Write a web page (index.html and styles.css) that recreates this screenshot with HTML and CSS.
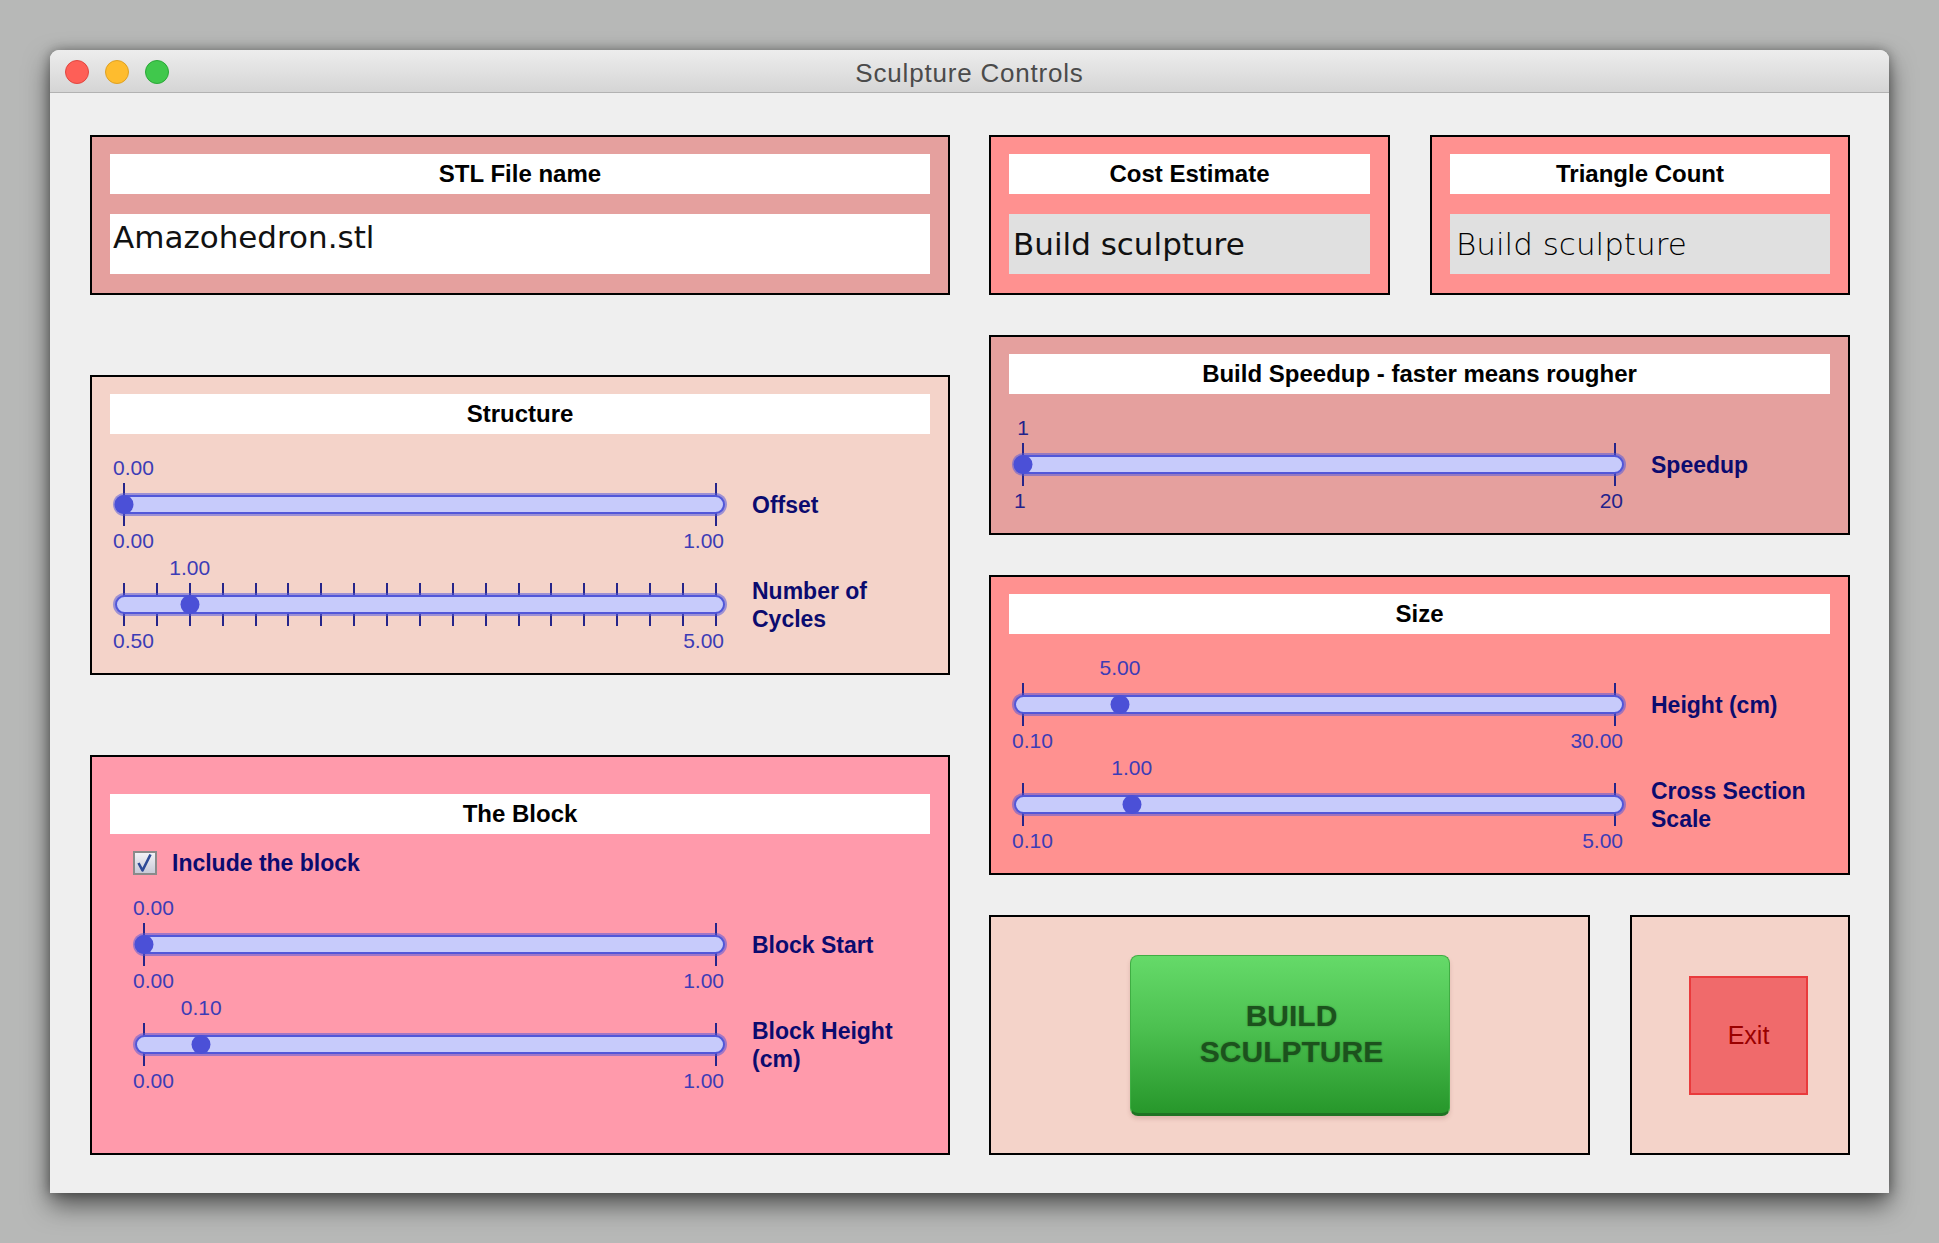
FILE: index.html
```html
<!DOCTYPE html>
<html>
<head>
<meta charset="utf-8">
<title>Sculpture Controls</title>
<link rel="stylesheet" href="styles.css">
</head>
<body>
<div class="window">
  <div class="titlebar">
    <div class="lights"><span class="light red"></span><span class="light yellow"></span><span class="light green"></span></div>
    <div class="title">Sculpture Controls</div>
    <div></div>
  </div>
  <div class="content">
    <div class="col left">
      <section class="panel p-stl h160">
        <div class="hdr">STL File name</div>
        <div class="field white">Amazohedron.stl</div>
      </section>

      <section class="panel p-soft h300">
        <div class="hdr">Structure</div>
        <div class="sliders">
          <div class="srow">
            <div class="slider">
              <div class="sv-top"><span class="val start">0.00</span></div>
              <div class="trackwrap">
                <div class="ticks"><i></i><i></i></div>
                <div class="track"></div>
                <div class="rail"><span class="thumb" style="left:0%"></span></div>
              </div>
              <div class="sv-bot"><span>0.00</span><span>1.00</span></div>
            </div>
            <div class="slabel">Offset</div>
          </div>
          <div class="srow">
            <div class="slider">
              <div class="sv-top"><div class="vrail"><span class="val" style="left:11.11%">1.00</span></div></div>
              <div class="trackwrap">
                <div class="ticks"><i></i><i></i><i></i><i></i><i></i><i></i><i></i><i></i><i></i><i></i><i></i><i></i><i></i><i></i><i></i><i></i><i></i><i></i><i></i></div>
                <div class="track"></div>
                <div class="rail"><span class="thumb" style="left:11.11%"></span></div>
              </div>
              <div class="sv-bot"><span>0.50</span><span>5.00</span></div>
            </div>
            <div class="slabel">Number of Cycles</div>
          </div>
        </div>
      </section>

      <section class="panel p-block h400">
        <div class="hdr">The Block</div>
        <div class="check">
          <svg class="cb" width="24" height="24" viewBox="0 0 24 24">
            <defs><linearGradient id="cbg" x1="0" y1="0" x2="0" y2="1"><stop offset="0" stop-color="#f4f4f8"/><stop offset="1" stop-color="#c6c8d6"/></linearGradient></defs>
            <rect x="1" y="1" width="22" height="22" fill="url(#cbg)" stroke="#8a8a8a" stroke-width="2"/>
            <path d="M5.5 12 L9.5 19.5 L17.5 3.5" fill="none" stroke="#2d4a96" stroke-width="2.6" stroke-linejoin="round"/>
          </svg>
          <span class="cblabel">Include the block</span>
        </div>
        <div class="sliders inset">
          <div class="srow">
            <div class="slider narrow">
              <div class="sv-top"><span class="val start">0.00</span></div>
              <div class="trackwrap">
                <div class="ticks"><i></i><i></i></div>
                <div class="track"></div>
                <div class="rail"><span class="thumb" style="left:0%"></span></div>
              </div>
              <div class="sv-bot"><span>0.00</span><span>1.00</span></div>
            </div>
            <div class="slabel">Block Start</div>
          </div>
          <div class="srow">
            <div class="slider narrow">
              <div class="sv-top"><div class="vrail"><span class="val" style="left:10%">0.10</span></div></div>
              <div class="trackwrap">
                <div class="ticks"><i></i><i></i></div>
                <div class="track"></div>
                <div class="rail"><span class="thumb" style="left:10%"></span></div>
              </div>
              <div class="sv-bot"><span>0.00</span><span>1.00</span></div>
            </div>
            <div class="slabel">Block Height (cm)</div>
          </div>
        </div>
      </section>
    </div>

    <div class="col right">
      <div class="row">
        <section class="panel p-hot h160 w-cost">
          <div class="hdr">Cost Estimate</div>
          <div class="field gray">Build sculpture</div>
        </section>
        <section class="panel p-hot h160 w-tri">
          <div class="hdr">Triangle Count</div>
          <div class="field gray thin">Build sculpture</div>
        </section>
      </div>

      <section class="panel p-stl h200">
        <div class="hdr">Build Speedup - faster means rougher</div>
        <div class="sliders">
          <div class="srow">
            <div class="slider">
              <div class="sv-top"><div class="vrail"><span class="val dark" style="left:0%">1</span></div></div>
              <div class="trackwrap">
                <div class="ticks"><i></i><i></i></div>
                <div class="track"></div>
                <div class="rail"><span class="thumb" style="left:0%"></span></div>
              </div>
              <div class="sv-bot dark pad"><span>1</span><span>20</span></div>
            </div>
            <div class="slabel">Speedup</div>
          </div>
        </div>
      </section>

      <section class="panel p-hot h300">
        <div class="hdr">Size</div>
        <div class="sliders">
          <div class="srow">
            <div class="slider">
              <div class="sv-top"><div class="vrail"><span class="val" style="left:16.39%">5.00</span></div></div>
              <div class="trackwrap">
                <div class="ticks"><i></i><i></i></div>
                <div class="track"></div>
                <div class="rail"><span class="thumb" style="left:16.39%"></span></div>
              </div>
              <div class="sv-bot"><span>0.10</span><span>30.00</span></div>
            </div>
            <div class="slabel">Height (cm)</div>
          </div>
          <div class="srow">
            <div class="slider">
              <div class="sv-top"><div class="vrail"><span class="val" style="left:18.37%">1.00</span></div></div>
              <div class="trackwrap">
                <div class="ticks"><i></i><i></i></div>
                <div class="track"></div>
                <div class="rail"><span class="thumb" style="left:18.37%"></span></div>
              </div>
              <div class="sv-bot"><span>0.10</span><span>5.00</span></div>
            </div>
            <div class="slabel">Cross Section Scale</div>
          </div>
        </div>
      </section>

      <div class="row">
        <section class="panel p-soft h240 w-build">
          <button class="build">BUILD<br>SCULPTURE</button>
        </section>
        <section class="panel p-soft h240 w-exit">
          <button class="exit">Exit</button>
        </section>
      </div>
    </div>
  </div>
</div>
</body>
</html>
```

FILE: styles.css
```css
* { box-sizing: border-box; }
html, body { margin: 0; padding: 0; }
body {
  width: 1939px;
  height: 1243px;
  overflow: hidden;
  background: #b7b8b7;
  padding: 50px;
  font-family: "Liberation Sans", Arial, sans-serif;
}

.window {
  width: 1839px;
  height: 1143px;
  background: #efefef;
  border-radius: 9px 9px 0 0;
  box-shadow: 0 12px 26px rgba(0,0,0,0.55), 0 0 12px rgba(0,0,0,0.35);
  display: flex;
  flex-direction: column;
}

.titlebar {
  flex: none;
  height: 43px;
  display: grid;
  grid-template-columns: 1fr auto 1fr;
  align-items: center;
  background: linear-gradient(#ededed, #d5d5d5);
  border-bottom: 1px solid #b2b2b2;
  border-radius: 9px 9px 0 0;
}
.lights { display: flex; gap: 16px; padding-left: 15px; }
.light { width: 24px; height: 24px; border-radius: 50%; display: block; }
.red { background: #fe5f57; border: 1px solid #e1463f; }
.yellow { background: #febc2e; border: 1px solid #dea123; }
.green { background: #40c84c; border: 1px solid #2aa837; }
.title {
  font-size: 26px;
  line-height: 42px;
  padding-top: 2px;
  letter-spacing: 0.8px;
  color: #4b4b4b;
}

.content {
  flex: 1;
  display: flex;
  gap: 39px;
  padding: 42px 39px 38px 40px;
}
.col { display: flex; flex-direction: column; }
.col.left { width: 860px; gap: 80px; }
.col.right { width: 861px; gap: 40px; }
.row { display: flex; gap: 40px; }

.panel {
  border: 2px solid #000;
  padding: 17px 18px 0;
  flex: none;
}
.h160 { height: 160px; }
.h200 { height: 200px; }
.h240 { height: 240px; }
.h300 { height: 300px; }
.h400 { height: 400px; }
.w-cost { width: 401px; }
.w-tri { width: 420px; }
.w-build { width: 601px; }
.w-exit { width: 220px; }

.p-stl { background: #e5a09e; }
.p-hot { background: #ff9190; }
.p-soft { background: #f4d3c9; }
.p-block { background: #ff9aab; padding-top: 37px; }

.hdr {
  background: #fff;
  height: 40px;
  line-height: 40px;
  text-align: center;
  font-weight: bold;
  font-size: 24px;
  color: #000;
  white-space: nowrap;
}

.field {
  margin-top: 20px;
  height: 60px;
  font-family: "DejaVu Sans", sans-serif;
  font-size: 31px;
  color: #111;
  white-space: nowrap;
}
.field.white { background: #fff; padding: 5px 0 0 3px; line-height: 36px; }
.field.gray { background: #e0e0e0; padding: 1px 0 0 4px; line-height: 59px; }
.field.thin { font-weight: 200; padding-left: 6px; color: #000; }

/* sliders */
.sliders {
  margin-top: 24px;
  padding-left: 3px;
  display: flex;
  flex-direction: column;
  gap: 7px;
}
.sliders.inset { margin-top: 23px; padding-left: 23px; }
.srow { display: flex; align-items: center; }
.slider { width: 614px; flex: none; display: flex; flex-direction: column; }
.slider.narrow { width: 594px; }
.slabel {
  margin-left: 25px;
  font-weight: bold;
  font-size: 23px;
  line-height: 28px;
  color: #0b0b6f;
}

.sv-top { position: relative; height: 20px; margin-bottom: 5px; flex: none; }
.vrail { position: absolute; left: 11px; right: 11px; top: 0; bottom: 0; }
.val {
  position: absolute;
  top: 0;
  transform: translateX(-50%);
  font-size: 21px;
  line-height: 20px;
  color: #3c3cb6;
  white-space: nowrap;
}
.val.start { left: 0; transform: none; }
.dark { color: #22228c; }

.trackwrap { position: relative; height: 43px; padding-top: 12px; flex: none; }
.ticks {
  position: absolute;
  left: 10px; right: 10px; top: 0; bottom: 0;
  display: flex;
  justify-content: space-between;
}
.ticks i { display: block; width: 2px; height: 100%; background: #25258a; }
.track {
  position: relative;
  z-index: 1;
  margin: 0 2px;
  height: 19px;
  border: 2px solid #5157d9;
  border-radius: 10px;
  background: #c7cbfb;
  box-shadow: 0 0 0 2px rgba(84,90,220,0.55);
}
.rail { position: absolute; z-index: 2; left: 11px; right: 11px; top: 0; bottom: 0; }
.thumb {
  position: absolute;
  top: 12px;
  width: 19px;
  height: 19px;
  border-radius: 50%;
  background: #4b50d7;
  transform: translateX(-50%);
}

.sv-bot {
  margin-top: 5px;
  height: 20px;
  flex: none;
  display: flex;
  justify-content: space-between;
  padding-right: 3px;
  font-size: 21px;
  line-height: 20px;
  color: #3c3cb6;
}
.sv-bot.dark { color: #22228c; }
.sv-bot.pad { padding-left: 2px; }

/* checkbox */
.check {
  margin-top: 17px;
  height: 24px;
  padding-left: 23px;
  display: flex;
  align-items: center;
  gap: 15px;
}
.cb { display: block; flex: none; }
.cblabel { font-weight: bold; font-size: 23px; color: #0b0b6f; }

/* buttons */
.w-build { display: flex; align-items: center; justify-content: center; padding: 0; }
.build {
  width: 320px;
  height: 161px;
  border: 1px solid #3fae43;
  border-bottom: 3px solid #1f7323;
  border-radius: 8px;
  background: linear-gradient(#65da69, #4dc151 45%, #27972b);
  box-shadow: 0 3px 4px rgba(120,60,50,0.18);
  font-family: "Liberation Sans", Arial, sans-serif;
  font-weight: bold;
  font-size: 30px;
  line-height: 36px;
  color: #1c521d;
  text-shadow: 0 0 2px rgba(20,70,20,0.45);
  padding: 0 0 0 4px;
}
.w-exit { display: flex; align-items: center; padding: 0 0 0 57px; }
.exit {
  width: 119px;
  height: 119px;
  background: #f06a6b;
  border: 2px solid #e93a3c;
  font-family: "Liberation Sans", Arial, sans-serif;
  font-size: 25px;
  color: #9a0000;
  padding: 0;
}
```
